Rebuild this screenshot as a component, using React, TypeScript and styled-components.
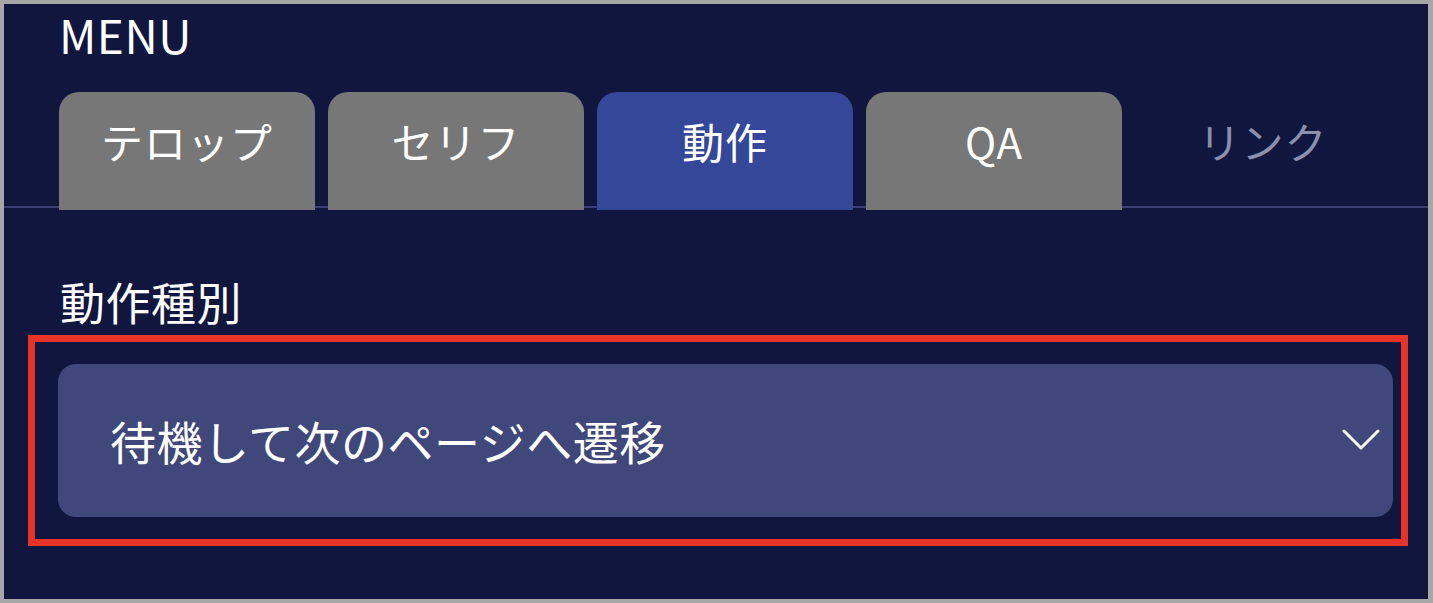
import React from "react";
import styled, { createGlobalStyle } from "styled-components";

const GlobalStyle = createGlobalStyle`
  html, body { margin: 0; padding: 0; background: #ffffff; }
  * { box-sizing: border-box; }
`;

const Frame = styled.div`
  width: 1433px;
  height: 603px;
  border-style: solid;
  border-color: #a7a7a7;
  border-width: 4px 5px 4px 4px;
  background: #11163f;
  font-family: "Noto Sans CJK JP", "Noto Sans", sans-serif;
  color: #ffffff;
  display: flex;
  flex-direction: column;
  overflow: hidden;
`;

const MenuTitle = styled.div`
  padding-left: 55px;
  margin-top: 4px;
  font-size: 46px;
  line-height: 52px;
  font-weight: 400;
  letter-spacing: 0.5px;
`;

const TabRow = styled.div`
  display: flex;
  align-items: flex-end;
  gap: 13px;
  padding-left: 55px;
  margin-top: 32px;
  border-bottom: 2px solid #3a4072;
`;

const Tab = styled.div<{ $variant: "gray" | "active" | "plain" }>`
  width: 256px;
  height: 118px;
  margin-bottom: -4px;
  border-radius: 20px 20px 0 0;
  display: flex;
  justify-content: center;
  align-items: flex-start;
  padding-top: 21px;
  font-size: 42px;
  line-height: 56px;
  font-weight: 400;
  letter-spacing: 1px;
  background: ${(p) =>
    p.$variant === "gray" ? "#777777" : p.$variant === "active" ? "#344799" : "transparent"};
  color: ${(p) => (p.$variant === "plain" ? "#8a90ad" : "#ffffff")};
`;

const Body = styled.div`
  padding: 0 0 0 24px;
  display: flex;
  flex-direction: column;
`;

const FieldLabel = styled.div`
  margin-top: 66px;
  padding-left: 32px;
  font-size: 45px;
  line-height: 56px;
  font-weight: 400;
  letter-spacing: 0.5px;
`;

const Highlight = styled.div`
  width: 1380px;
  margin-top: 5px;
  border: 7px solid #e8332a;
  padding: 22px 8px 22px 23px;
`;

const Select = styled.div`
  height: 153px;
  border-radius: 18px;
  background: #40477a;
  display: flex;
  align-items: center;
  justify-content: space-between;
  padding: 0 13px 2px 52px;
`;

const SelectValue = styled.span`
  font-size: 46px;
  line-height: 56px;
  font-weight: 400;
  letter-spacing: 0.5px;
`;

const Chevron = () => (
  <svg width="38" height="24" viewBox="0 0 38 24" fill="none">
    <polyline points="2,3 19,20 36,3" stroke="#ffffff" strokeWidth="3" strokeLinecap="round" strokeLinejoin="round" />
  </svg>
);

export default function App() {
  const tabs: { label: string; variant: "gray" | "active" | "plain" }[] = [
    { label: "テロップ", variant: "gray" },
    { label: "セリフ", variant: "gray" },
    { label: "動作", variant: "active" },
    { label: "QA", variant: "gray" },
    { label: "リンク", variant: "plain" },
  ];
  return (
    <>
      <GlobalStyle />
      <Frame>
        <MenuTitle>MENU</MenuTitle>
        <TabRow>
          {tabs.map((t) => (
            <Tab key={t.label} $variant={t.variant}>
              {t.label}
            </Tab>
          ))}
        </TabRow>
        <Body>
          <FieldLabel>動作種別</FieldLabel>
          <Highlight>
            <Select>
              <SelectValue>待機して次のページへ遷移</SelectValue>
              <Chevron />
            </Select>
          </Highlight>
        </Body>
      </Frame>
    </>
  );
}
